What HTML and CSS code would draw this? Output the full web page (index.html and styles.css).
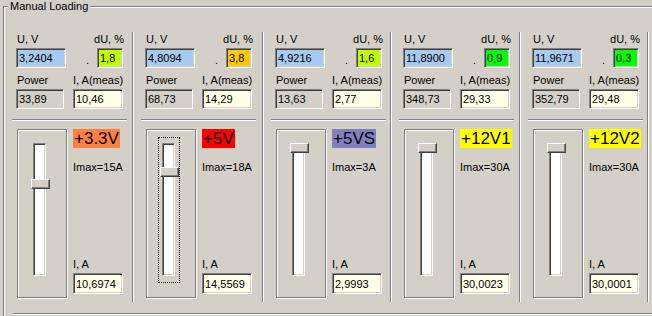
FILE: index.html
```html
<!DOCTYPE html>
<html lang="en">
<head>
    <meta charset="UTF-8">
    <title>Manual Loading</title>
    <link rel="stylesheet" href="styles.css">
</head>
<body>
<div class="group">
    <span class="group-title">Manual Loading</span>

    <div class="channels">
        <!-- +3.3V -->
        <div class="channel">
            <div class="labels"><span>U, V</span><span>dU, %</span></div>
            <div class="row">
                <div class="edit volt">3,2404</div>
                <span class="tick">.</span>
                <div class="edit delta lime">1,8</div>
            </div>
            <div class="labels second"><span>Power</span><span>I, A(meas)</span></div>
            <div class="row pair">
                <div class="edit power">33,89</div>
                <div class="edit info meas">10,46</div>
            </div>
            <div class="sep"></div>
            <div class="lower">
                <div class="slider">
                    <div class="track"></div>
                    <div class="thumb" style="top: 49px"></div>
                </div>
                <div class="side">
                    <span class="chip orange">+3.3V</span>
                    <div class="imax">Imax=15A</div>
                    <div class="ia">I, A</div>
                    <div class="edit info current">10,6974</div>
                </div>
            </div>
        </div>

        <!-- +5V -->
        <div class="channel">
            <div class="labels"><span>U, V</span><span>dU, %</span></div>
            <div class="row">
                <div class="edit volt">4,8094</div>
                <span class="tick">.</span>
                <div class="edit delta amber">3,8</div>
            </div>
            <div class="labels second"><span>Power</span><span>I, A(meas)</span></div>
            <div class="row pair">
                <div class="edit power">68,73</div>
                <div class="edit info meas">14,29</div>
            </div>
            <div class="sep"></div>
            <div class="lower">
                <div class="slider">
                    <div class="focus"></div>
                    <div class="track"></div>
                    <div class="thumb" style="top: 37px"></div>
                </div>
                <div class="side">
                    <span class="chip red">+5V</span>
                    <div class="imax">Imax=18A</div>
                    <div class="ia">I, A</div>
                    <div class="edit info current">14,5569</div>
                </div>
            </div>
        </div>

        <!-- +5VS -->
        <div class="channel">
            <div class="labels"><span>U, V</span><span>dU, %</span></div>
            <div class="row">
                <div class="edit volt">4,9216</div>
                <span class="tick">.</span>
                <div class="edit delta lime">1,6</div>
            </div>
            <div class="labels second"><span>Power</span><span>I, A(meas)</span></div>
            <div class="row pair">
                <div class="edit power">13,63</div>
                <div class="edit info meas">2,77</div>
            </div>
            <div class="sep"></div>
            <div class="lower">
                <div class="slider">
                    <div class="track"></div>
                    <div class="thumb" style="top: 13px"></div>
                </div>
                <div class="side">
                    <span class="chip slate">+5VS</span>
                    <div class="imax">Imax=3A</div>
                    <div class="ia">I, A</div>
                    <div class="edit info current">2,9993</div>
                </div>
            </div>
        </div>

        <!-- +12V1 -->
        <div class="channel">
            <div class="labels"><span>U, V</span><span>dU, %</span></div>
            <div class="row">
                <div class="edit volt">11,8900</div>
                <span class="tick">.</span>
                <div class="edit delta green">0,9</div>
            </div>
            <div class="labels second"><span>Power</span><span>I, A(meas)</span></div>
            <div class="row pair">
                <div class="edit power">348,73</div>
                <div class="edit info meas">29,33</div>
            </div>
            <div class="sep"></div>
            <div class="lower">
                <div class="slider">
                    <div class="track"></div>
                    <div class="thumb" style="top: 13px"></div>
                </div>
                <div class="side">
                    <span class="chip yellow">+12V1</span>
                    <div class="imax">Imax=30A</div>
                    <div class="ia">I, A</div>
                    <div class="edit info current">30,0023</div>
                </div>
            </div>
        </div>

        <!-- +12V2 -->
        <div class="channel">
            <div class="labels"><span>U, V</span><span>dU, %</span></div>
            <div class="row">
                <div class="edit volt">11,9671</div>
                <span class="tick">.</span>
                <div class="edit delta green">0,3</div>
            </div>
            <div class="labels second"><span>Power</span><span>I, A(meas)</span></div>
            <div class="row pair">
                <div class="edit power">352,79</div>
                <div class="edit info meas">29,48</div>
            </div>
            <div class="sep"></div>
            <div class="lower">
                <div class="slider">
                    <div class="track"></div>
                    <div class="thumb" style="top: 13px"></div>
                </div>
                <div class="side">
                    <span class="chip yellow">+12V2</span>
                    <div class="imax">Imax=30A</div>
                    <div class="ia">I, A</div>
                    <div class="edit info current">30,0001</div>
                </div>
            </div>
        </div>
    </div>

    <!-- top edge of the next frame, cut off by the window -->
    <div class="next-frame"></div>
</div>
</body>
</html>
```

FILE: styles.css
```css
body {
    margin: 0;
    width: 652px;
    height: 316px;
    overflow: hidden;
    background-color: #d4d0c8;
    font-family: 'Liberation Sans', Arial, sans-serif;
    font-size: 11px;
    line-height: 13px;
    color: #000;
}

/* Etched group box, its right and bottom edges are outside the window */
.group {
    position: relative;
    box-sizing: border-box;
    margin: 6px 0 0 3px;
    width: 649px;
    height: 310px;
    border-top: 1px solid #808080;
    border-left: 1px solid #808080;
    box-shadow: inset 1px 1px 0 #fff;
}

.group-title {
    position: absolute;
    top: -7px;
    left: 4px;
    padding: 0 2px;
    background-color: #d4d0c8;
}

.channels {
    display: grid;
    grid-template-columns: 129px 130px 128px 129px 128px;
    margin-top: 25px;
}

.channel {
    box-sizing: border-box;
    height: 270px;
    padding: 1px 0 0 12px;
    border-right: 1px solid #808080;
    box-shadow: 1px 0 0 #fff;
}

.labels {
    display: flex;
    justify-content: space-between;
    width: 107px;
    padding-left: 1px;
    height: 13px;
    white-space: nowrap;
}

.labels.second {
    justify-content: flex-start;
    margin-top: 5px;
}

.labels.second span:first-child {
    width: 56px;
}

.row {
    display: flex;
    width: 107px;
    margin-top: 2px;
}

.row.pair {
    gap: 9px;
}

.tick {
    margin-left: auto;
    margin-right: 8px;
    padding-top: 4px;
    line-height: 17px;
}

/* Sunken edit boxes */
.edit {
    box-sizing: border-box;
    height: 20px;
    padding: 1px 0 0 2px;
    line-height: 17px;
    border: 1px solid;
    border-color: #808080 #fff #fff #808080;
    box-shadow: inset 1px 1px 0 #404040, inset -1px -1px 0 #d4d0c8;
    background-color: #d4d0c8;
    white-space: nowrap;
    overflow: hidden;
}

.volt {
    width: 50px;
    background-color: #a6caf0;
}

.delta {
    width: 26px;
}

.power {
    width: 48px;
}

.meas {
    width: 50px;
}

.info {
    background-color: #ffffe8;
}

.lime { background-color: #c0ff00; }
.amber { background-color: #ffc800; }
.green { background-color: #00ff00; }

.sep {
    width: 115px;
    margin: 10px 0 0 -4px;
    border-top: 1px solid #808080;
    border-bottom: 1px solid #fff;
}

.lower {
    display: flex;
    margin-top: 8px;
}

/* Trackbar in an etched frame */
.slider {
    position: relative;
    box-sizing: border-box;
    width: 50px;
    height: 169px;
    margin-left: 1px;
    border: 1px solid #808080;
    box-shadow: inset 1px 1px 0 #fff, 1px 1px 0 #fff;
}

.track {
    box-sizing: border-box;
    width: 13px;
    height: 133px;
    margin: 13px 0 0 15px;
    border: 1px solid;
    border-color: #808080 #fff #fff #808080;
    box-shadow: inset 1px 1px 0 #404040, inset -1px -1px 0 #d4d0c8;
    background-color: #fff;
}

.thumb {
    position: absolute;
    left: 13px;
    box-sizing: border-box;
    width: 19px;
    height: 10px;
    border: 1px solid;
    border-color: #fff #404040 #404040 #fff;
    box-shadow: inset -1px -1px 0 #808080;
    background-color: #d4d0c8;
}

.focus {
    position: absolute;
    left: 11px;
    top: 7px;
    box-sizing: border-box;
    width: 22px;
    height: 146px;
    border: 1px dotted #000;
}

.side {
    display: flex;
    flex-direction: column;
    align-items: flex-start;
    margin-left: 6px;
}

.chip {
    padding: 0 1px;
    font-size: 17px;
    line-height: 19px;
    height: 19px;
}

.orange { background-color: #ff8040; }
.red { background-color: #ff0000; }
.slate { background-color: #8080c0; }
.yellow { background-color: #ffff00; }

.imax {
    margin-top: 13px;
    white-space: nowrap;
}

.ia {
    margin-top: auto;
}

.current {
    width: 50px;
    height: 21px;
    margin: 2px 0 4px;
    padding-top: 2px;
}

.next-frame {
    margin: 11px 0 0 9px;
    border-top: 1px solid #808080;
    border-bottom: 1px solid #fff;
}
```
